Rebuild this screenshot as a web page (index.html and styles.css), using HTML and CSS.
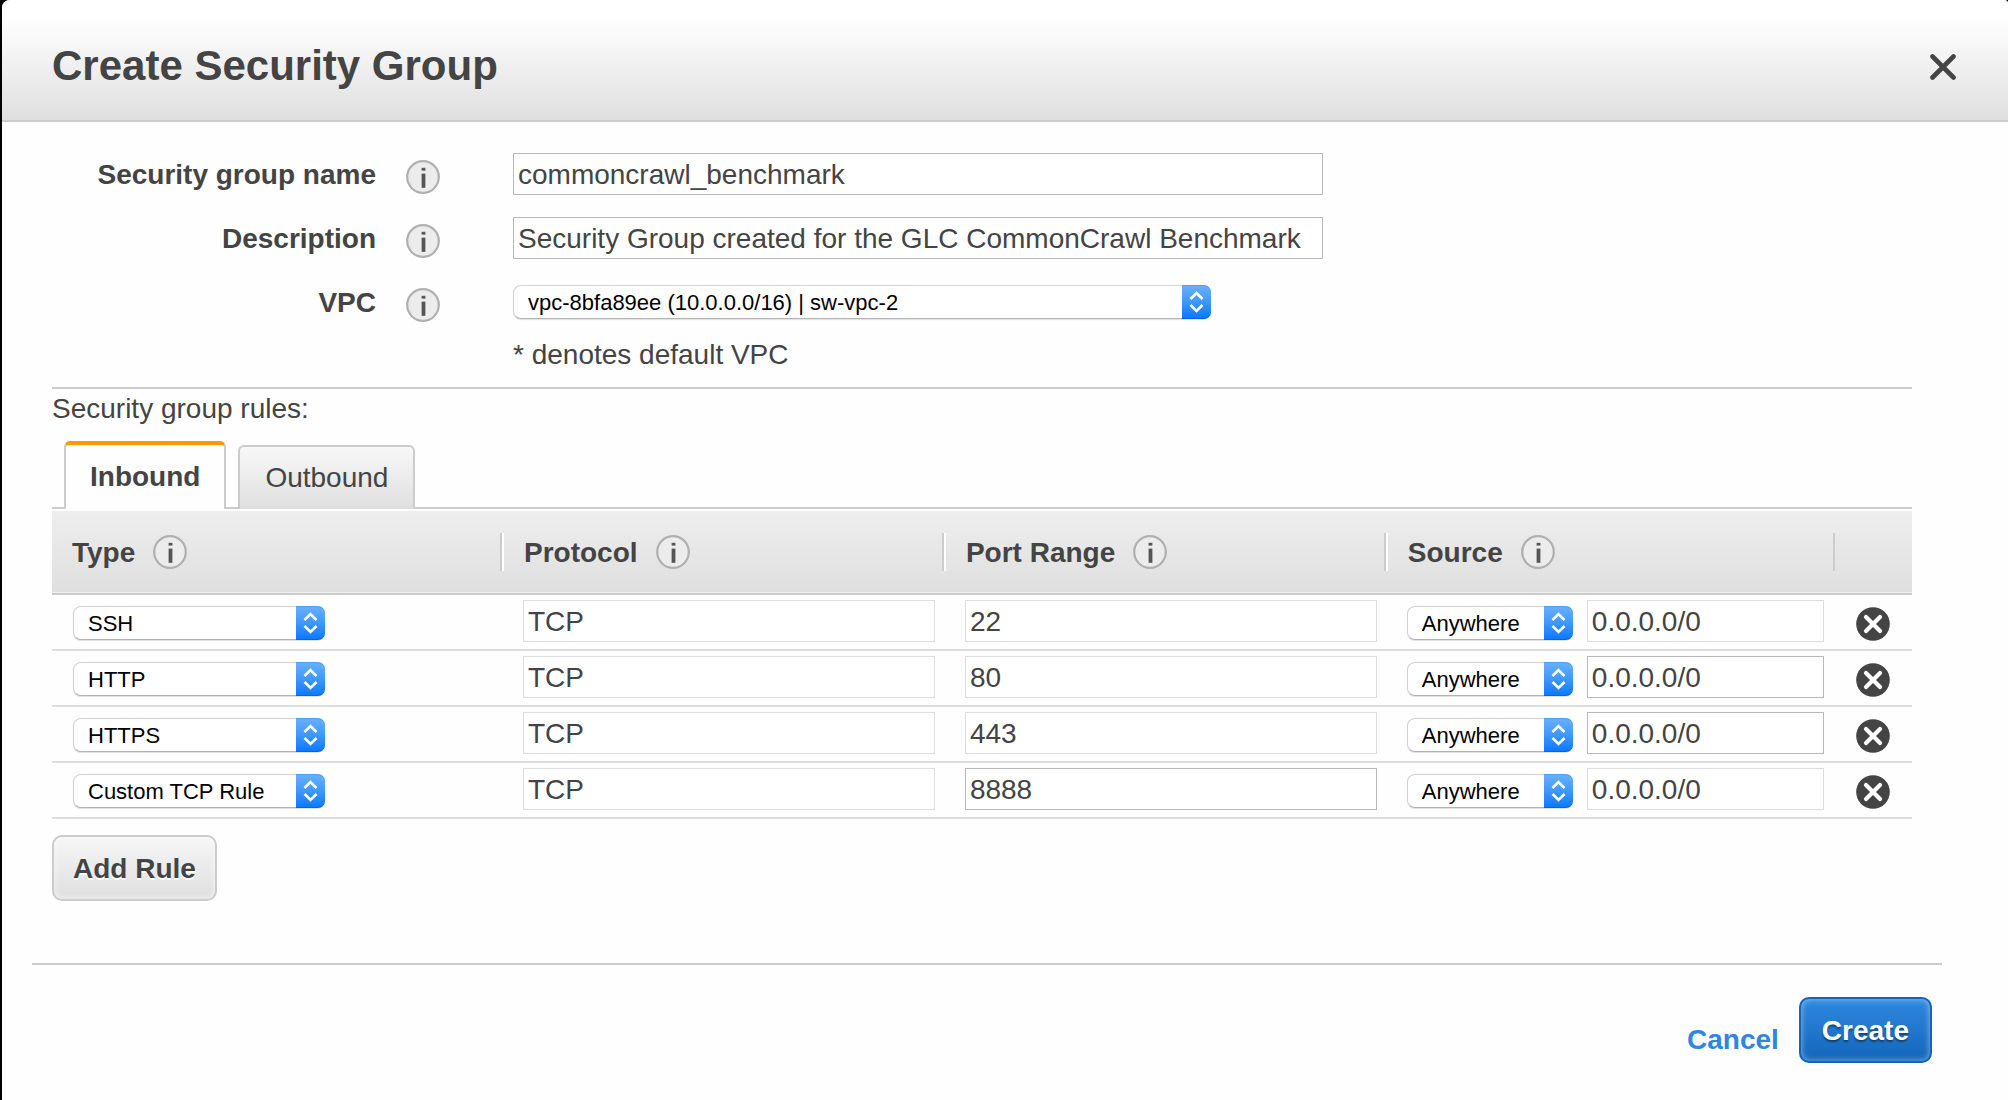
FILE: index.html
```html
<!DOCTYPE html>
<html lang="en">
<head>
<meta charset="utf-8">
<title>Create Security Group</title>
<link rel="stylesheet" href="styles.css">
</head>
<body>
<svg class="sprite" aria-hidden="true">
  <symbol id="i-info" viewBox="0 0 34 34">
    <circle cx="17" cy="17" r="15.8" fill="#ececec" stroke="#b0b0b0" stroke-width="2.2"/>
    <rect x="15.6" y="7.8" width="3.8" height="2.8" fill="#555"/>
    <rect x="15.6" y="13.6" width="3.8" height="14.2" fill="#555"/>
  </symbol>
  <symbol id="i-remove" viewBox="0 0 34 34">
    <circle cx="17" cy="17" r="16.8" fill="#444"/>
    <path d="M10 10l14 14M24 10l-14 14" stroke="#fff" stroke-width="4.2" stroke-linecap="round"/>
  </symbol>
</svg>
<main class="dialog">
  <header class="dialog-head">
    <h1>Create Security Group</h1>
    <button class="icon-btn" type="button" aria-label="Close">
      <svg width="26" height="26" viewBox="0 0 26 26"><path d="M2.5 2.5l21 21M23.5 2.5l-21 21" stroke="#444" stroke-width="4.6" stroke-linecap="round"/></svg>
    </button>
  </header>

  <form class="dialog-body">
    <div class="fields">
      <label for="name">Security group name</label>
      <button class="icon-btn info" type="button" aria-label="About the name"><svg><use href="#i-info"/></svg></button>
      <input class="text" id="name" type="text" value="commoncrawl_benchmark">

      <label for="desc">Description</label>
      <button class="icon-btn info" type="button" aria-label="About the description"><svg><use href="#i-info"/></svg></button>
      <input class="text" id="desc" type="text" value="Security Group created for the GLC CommonCrawl Benchmark">

      <label for="vpc">VPC</label>
      <button class="icon-btn info" type="button" aria-label="About the VPC"><svg><use href="#i-info"/></svg></button>
      <span class="pick pick-vpc"><select id="vpc"><option>vpc-8bfa89ee (10.0.0.0/16) | sw-vpc-2</option></select></span>

      <p class="note">* denotes default VPC</p>
    </div>

    <section class="rules-block">
      <p class="rules-title">Security group rules:</p>
      <div class="tabs" role="tablist">
        <button class="tab active" type="button" role="tab" aria-selected="true">Inbound</button>
        <button class="tab" type="button" role="tab" aria-selected="false">Outbound</button>
      </div>
      <table class="rules">
        <colgroup><col class="c-type"><col class="c-mid"><col class="c-mid"><col class="c-source"><col></colgroup>
        <thead>
          <tr>
            <th><div class="head"><span>Type</span> <button class="icon-btn" type="button" aria-label="About type"><svg><use href="#i-info"/></svg></button></div></th>
            <th><div class="head"><span>Protocol</span> <button class="icon-btn" type="button" aria-label="About protocol"><svg><use href="#i-info"/></svg></button></div></th>
            <th><div class="head"><span>Port Range</span> <button class="icon-btn" type="button" aria-label="About port range"><svg><use href="#i-info"/></svg></button></div></th>
            <th><div class="head last"><span>Source</span> <button class="icon-btn" type="button" aria-label="About source"><svg><use href="#i-info"/></svg></button></div></th>
            <th></th>
          </tr>
        </thead>
        <tbody>
          <tr>
            <td><span class="pick pick-type"><select aria-label="Type"><option>SSH</option></select></span></td>
            <td><input class="text locked" type="text" aria-label="Protocol" value="TCP" readonly></td>
            <td><input class="text locked" type="text" aria-label="Port range" value="22" readonly></td>
            <td><div class="source"><span class="pick pick-source"><select aria-label="Source"><option>Anywhere</option></select></span><input class="text locked" type="text" aria-label="Source address" value="0.0.0.0/0" readonly></div></td>
            <td><button class="icon-btn remove" type="button" aria-label="Remove rule"><svg><use href="#i-remove"/></svg></button></td>
          </tr>
          <tr>
            <td><span class="pick pick-type"><select aria-label="Type"><option>HTTP</option></select></span></td>
            <td><input class="text locked" type="text" aria-label="Protocol" value="TCP" readonly></td>
            <td><input class="text locked" type="text" aria-label="Port range" value="80" readonly></td>
            <td><div class="source"><span class="pick pick-source"><select aria-label="Source"><option>Anywhere</option></select></span><input class="text" type="text" aria-label="Source address" value="0.0.0.0/0"></div></td>
            <td><button class="icon-btn remove" type="button" aria-label="Remove rule"><svg><use href="#i-remove"/></svg></button></td>
          </tr>
          <tr>
            <td><span class="pick pick-type"><select aria-label="Type"><option>HTTPS</option></select></span></td>
            <td><input class="text locked" type="text" aria-label="Protocol" value="TCP" readonly></td>
            <td><input class="text locked" type="text" aria-label="Port range" value="443" readonly></td>
            <td><div class="source"><span class="pick pick-source"><select aria-label="Source"><option>Anywhere</option></select></span><input class="text" type="text" aria-label="Source address" value="0.0.0.0/0"></div></td>
            <td><button class="icon-btn remove" type="button" aria-label="Remove rule"><svg><use href="#i-remove"/></svg></button></td>
          </tr>
          <tr>
            <td><span class="pick pick-type"><select aria-label="Type"><option>Custom TCP Rule</option></select></span></td>
            <td><input class="text locked" type="text" aria-label="Protocol" value="TCP" readonly></td>
            <td><input class="text" type="text" aria-label="Port range" value="8888"></td>
            <td><div class="source"><span class="pick pick-source"><select aria-label="Source"><option>Anywhere</option></select></span><input class="text locked" type="text" aria-label="Source address" value="0.0.0.0/0" readonly></div></td>
            <td><button class="icon-btn remove" type="button" aria-label="Remove rule"><svg><use href="#i-remove"/></svg></button></td>
          </tr>
        </tbody>
      </table>
      <button class="btn" type="button">Add Rule</button>
    </section>
  </form>

  <footer class="dialog-foot">
    <a href="#cancel">Cancel</a>
    <button class="btn primary" type="button">Create</button>
  </footer>
</main>
</body>
</html>
```
FILE: styles.css
```css
* { box-sizing: border-box; }

body {
  margin: 0;
  background: #000;
  color: #444;
  font: 28px/32px "Liberation Sans", Arial, sans-serif;
}

h1, p { margin: 0; }
button, input, select { font: inherit; color: inherit; margin: 0; }
.sprite { display: none; }

.dialog {
  min-height: 100vh;
  margin-left: 2px;
  background: #fefefe;
  border-radius: 8px 4px 0 0;
  overflow: hidden;
}

.dialog-head {
  display: flex;
  align-items: center;
  justify-content: space-between;
  padding: 42px 52px 30px 50px;
  border-bottom: 2px solid #ccc;
  background: linear-gradient(#fff 15%, #dfdfdf);
}
.dialog-head h1 { font-size: 42px; line-height: 48px; }
.dialog-head .icon-btn { margin-top: 12px; margin-bottom: 10px; }

.icon-btn {
  display: block;
  flex: none;
  padding: 0;
  border: 0;
  background: none;
}
.icon-btn svg { display: block; width: 34px; height: 34px; }
.dialog-head .icon-btn svg { width: 26px; height: 26px; }

.dialog-body { padding: 31px 96px 0 50px; }

.fields {
  display: grid;
  grid-template-columns: 324px 34px 1fr;
  grid-auto-rows: 42px;
  row-gap: 22px;
  align-items: center;
  border-bottom: 2px solid #ccc;
}
.fields label { padding-top: 2px; font-weight: bold; text-align: right; }
.info { margin: 6px 0 0 30px; }
.fields > .text, .fields > .pick, .note { margin-left: 103px; }
.fields > .text { width: 810px; }
.note { grid-column: 3; line-height: 24px; align-self: start; margin-top: -2px; }

.text {
  display: block;
  width: 100%;
  height: 42px;
  padding: 2px 4px 0;
  border: 1px solid #b9b9b9;
  border-radius: 0;
  background: #fff;
}
.text.locked { border-color: #dedede; }

/* Select with a blue stepper cap at its right end */
.pick { position: relative; display: block; height: 34px; }
.pick select {
  display: block;
  width: 100%;
  height: 34px;
  padding: 1px 34px 0 14px;
  appearance: none;
  border: 1px solid #d2d2d2;
  border-bottom-color: #b4b4b4;
  border-radius: 8px;
  background: #fff;
  box-shadow: 0 1px 1px rgba(0, 0, 0, .12);
  color: #000;
  font-size: 22px;
  line-height: 32px;
}
.pick::after {
  content: "";
  position: absolute;
  top: 0;
  right: 0;
  width: 29px;
  height: 34px;
  border-radius: 0 7px 7px 0;
  background:
    url("data:image/svg+xml,%3Csvg xmlns='http://www.w3.org/2000/svg' viewBox='0 0 29 34'%3E%3Cpath d='M8.5 14l6-6 6 6M8.5 20l6 6 6-6' fill='none' stroke='white' stroke-width='2.6'/%3E%3C/svg%3E"),
    linear-gradient(#6cb0fa, #3f98fb 50%, #0a77ff);
  box-shadow: inset 0 1px #4f9df2, inset 0 -1px #0562ee;
  pointer-events: none;
}
.pick-vpc { width: 698px; }
.pick-type { width: 252px; }
.pick-source { width: 166px; flex: none; }

.rules-title { padding-top: 4px; }

.tabs {
  display: flex;
  align-items: flex-end;
  gap: 12px;
  height: 68px;
  margin: 16px 0 2px;
  padding-left: 12px;
  border-bottom: 2px solid #ccc;
}
.tab {
  height: 64px;
  margin-bottom: -2px;
  padding: 0 25px;
  border: 2px solid #ccc;
  border-bottom: 0;
  border-radius: 6px 6px 0 0;
  background: linear-gradient(#f8f8f8, #dfdfdf);
}
.tab.active {
  height: 68px;
  padding: 0 24px;
  border-top: 4px solid #f90;
  background: #fefefe;
  font-weight: bold;
}

.rules { width: 100%; border-collapse: collapse; table-layout: fixed; }
.c-type { width: 24.3%; }
.c-mid { width: 23.76%; }
.c-source { width: 24.03%; }
.rules thead tr { background: linear-gradient(#eee, #dfdfdf); border-bottom: 2px solid #ccc; }
.rules th { padding: 22px 0 22px 20px; }
.head {
  display: flex;
  align-items: center;
  gap: 18px;
  height: 38px;
  margin-right: 2px;
  border-right: 2px solid #ccc;
  box-shadow: 2px 0 #fff;
}
.head span { padding-top: 2px; }
.head.last { margin-right: 0; box-shadow: none; }
.rules tbody tr { border-bottom: 2px solid #dedede; }
.rules td { padding: 5px 11px 7px 19px; vertical-align: top; }
.rules td:first-child, .rules td:last-child { padding-left: 21px; }
.rules .pick { margin-top: 6px; }
.source { display: flex; gap: 14px; }
.source .text { flex: 1; min-width: 0; }
.remove { margin-top: 7px; }

.btn {
  height: 66px;
  padding: 2px 19px 0;
  border: 2px solid #ccc;
  border-radius: 10px;
  background: linear-gradient(#f6f6f6, #dfdfdf);
  box-shadow: inset 0 0 6px rgba(255, 255, 255, .7);
  font-weight: bold;
  text-shadow: 0 2px #fff;
}
.rules-block .btn { display: block; margin-top: 16px; }

.dialog-foot {
  display: flex;
  justify-content: flex-end;
  align-items: flex-end;
  gap: 20px;
  margin: 62px 66px 0 30px;
  padding: 32px 10px 36px;
  border-top: 2px solid #ccc;
}
.dialog-foot a {
  padding-bottom: 7px;
  color: #2e86de;
  font-weight: bold;
  text-decoration: none;
}
.primary {
  padding: 2px 21px 0;
  border-color: #1166bb;
  background: linear-gradient(#3088de, #1166bb);
  box-shadow: inset 0 0 6px rgba(255, 255, 255, .5);
  color: #fff;
  text-shadow: 0 2px 2px rgba(0, 0, 0, .45);
}
```
